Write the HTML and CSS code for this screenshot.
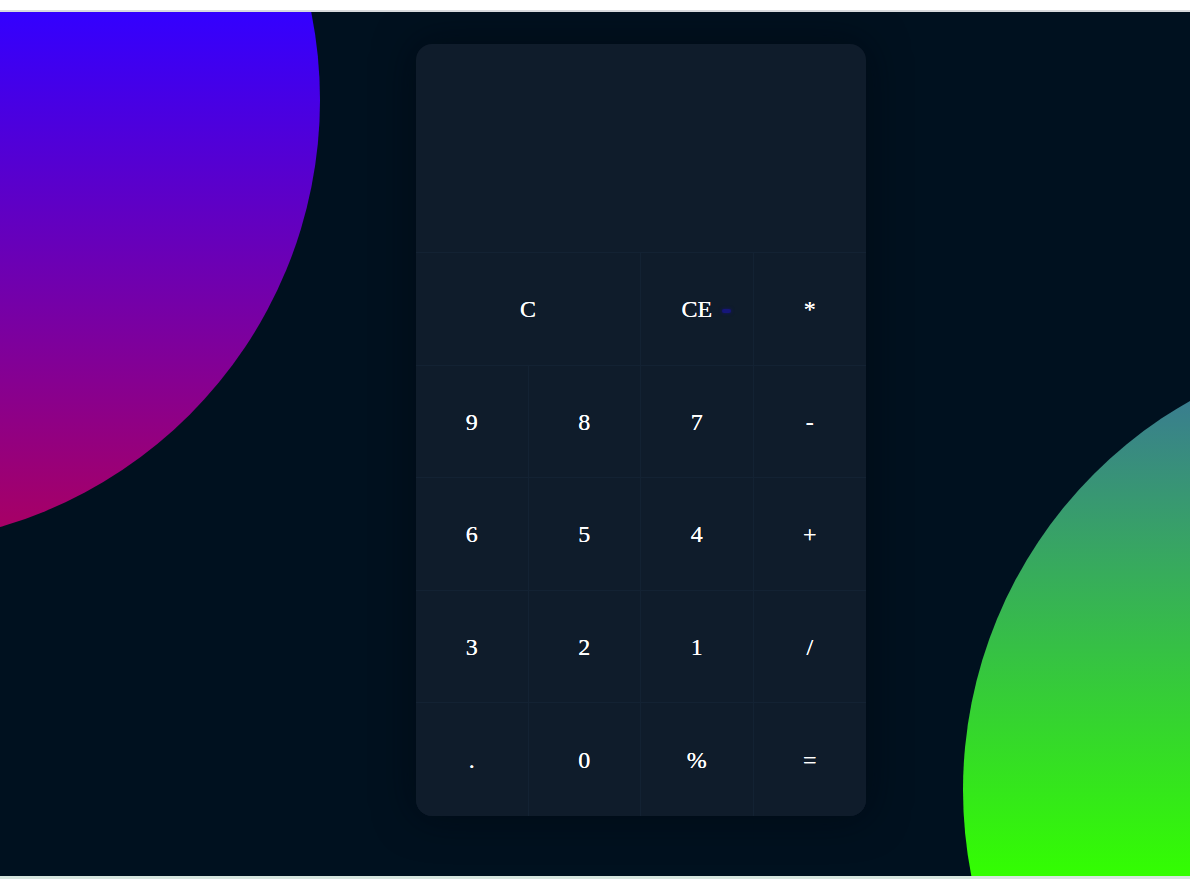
FILE: index.html
```html
<!DOCTYPE html>
<html lang="en">
<head>
<meta charset="utf-8">
<title>Calculator</title>
<link rel="stylesheet" href="styles.css">
</head>
<body>
<div class="topbar"></div>
<main class="stage">
  <div class="blob blob-left"></div>
  <div class="blob blob-right"></div>
  <div class="calc">
    <div class="display"></div>
    <div class="keys">
      <button class="key wide">C</button>
      <button class="key">CE<span class="mark"></span></button>
      <button class="key">*</button>
      <button class="key">9</button>
      <button class="key">8</button>
      <button class="key">7</button>
      <button class="key">-</button>
      <button class="key">6</button>
      <button class="key">5</button>
      <button class="key">4</button>
      <button class="key">+</button>
      <button class="key">3</button>
      <button class="key">2</button>
      <button class="key">1</button>
      <button class="key">/</button>
      <button class="key">.</button>
      <button class="key">0</button>
      <button class="key">%</button>
      <button class="key">=</button>
    </div>
  </div>
</main>
<div class="bottombar"></div>
</body>
</html>
```

FILE: styles.css
```css
* { box-sizing: border-box; }

html, body {
  margin: 0;
  padding: 0;
  background: #ffffff;
  overflow: hidden;
}

.topbar {
  height: 12px;
  background: #ffffff;
  border-bottom: 2px solid #d7dadd;
}

.stage {
  position: relative;
  height: 864px;
  background: #00111f;
  overflow: hidden;
  display: flex;
  justify-content: center;
  align-items: flex-start;
  padding-left: 92px;
  padding-top: 32px;
}

.blob {
  position: absolute;
  border-radius: 50%;
}

.blob-left {
  left: -570px;
  top: -357px;
  width: 890px;
  height: 890px;
  background: linear-gradient(to bottom, #3300ff 40%, #ab0060 100%);
}

.blob-right {
  left: 963px;
  top: 331px;
  width: 894px;
  height: 894px;
  background: linear-gradient(to bottom, #3a6ea0 0%, #33ff00 60%);
}

.calc {
  position: relative;
  width: 450px;
  background: #0f1c2b;
  border-radius: 16px;
  overflow: hidden;
  box-shadow: 0 0 40px rgba(0, 5, 12, 0.55);
  display: flex;
  flex-direction: column;
}

.display {
  height: 209px;
  border-bottom: 1px solid #132233;
}

.keys {
  display: grid;
  grid-template-columns: repeat(4, 1fr);
  grid-auto-rows: 112.6px;
}

.key {
  margin: 0;
  padding: 2px 0 0;
  background: #0f1c2b;
  border: none;
  border-right: 1px solid #132233;
  border-bottom: 1px solid #132233;
  color: #ffffff;
  font-family: "Liberation Serif", "Times New Roman", serif;
  font-size: 24px;
  display: flex;
  align-items: center;
  justify-content: center;
  text-shadow: 0 0 0.4px #ffffff;
}

.key:nth-child(4n+3) { border-right: none; }
.keys .key:nth-child(n+16) { border-bottom: none; }
.keys .key:nth-child(1),
.keys .key:nth-child(2) { border-right: 1px solid #132233; }
.keys .key:nth-child(3) { border-right: none; }

.wide { grid-column: span 2; }

.mark {
  display: inline-block;
  width: 9px;
  height: 4px;
  margin-left: 10px;
  margin-right: -19px;
  margin-top: 2px;
  background: #16167a;
  border-radius: 2px;
  box-shadow: 0 0 3px 1px rgba(22, 22, 110, 0.5);
}

.bottombar {
  height: 3px;
  background: #d6e6de;
}
```
